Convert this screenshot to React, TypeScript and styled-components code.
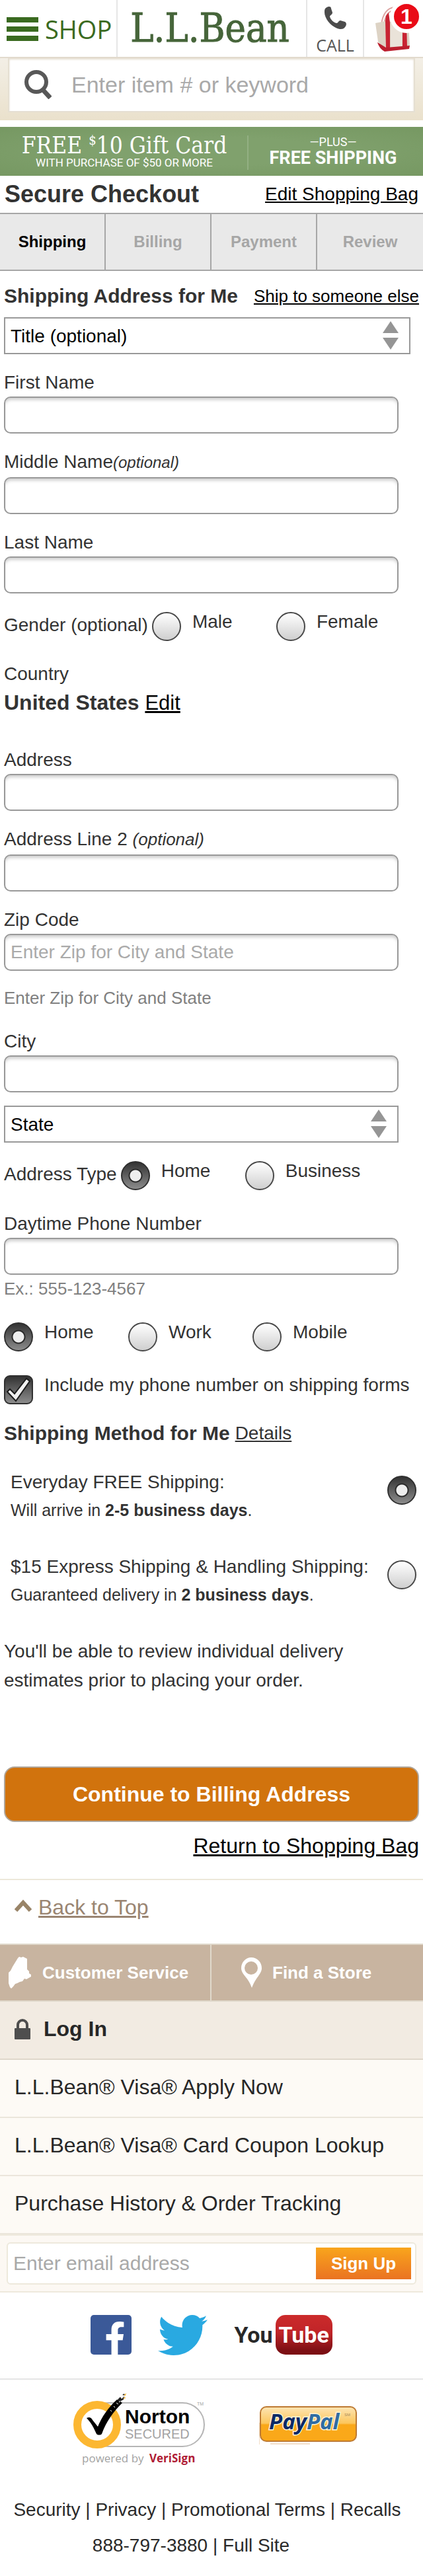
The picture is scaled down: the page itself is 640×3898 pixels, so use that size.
import React, { useState } from "react";
import styled, { createGlobalStyle } from "styled-components";
import { FaFacebookF, FaTwitter } from "react-icons/fa";

const sans = `"Liberation Sans", Arial, Helvetica, sans-serif`;
const humanist = `"Open Sans", "Noto Sans", sans-serif`;
const slab = `"DejaVu Serif Condensed", "DejaVu Serif", serif`;

const GlobalStyle = createGlobalStyle`
  *, *::before, *::after { box-sizing: border-box; }
  body {
    margin: 0;
    background: #fff;
    color: #333;
    font-family: ${sans};
    font-size: 28px;
    line-height: 32px;
  }
  h1, h2, p { margin: 0; padding: 0; }
  a { color: inherit; text-decoration: none; }
  input, select, button { font-family: inherit; margin: 0; border-radius: 0; }
  svg { display: block; flex: none; }
`;

/* Header */

const Header = styled.header`
  display: grid;
  grid-template-columns: 178px minmax(0, 1fr) 86px 89px;
  height: 88px;
  border-bottom: 2px solid #e2dacd;
`;

const ShopButton = styled.button`
  display: flex;
  align-items: center;
  gap: 10px;
  padding: 2px 0 0 10px;
  border: 0;
  border-right: 2px solid #e6e6e6;
  background: none;
  color: #3a6a20;
  font-family: ${humanist};
  font-size: 38px;
`;

const Logo = styled.a`
  display: flex;
  align-items: center;
  justify-content: center;
  padding-right: 6px;
  border-right: 2px solid #e6e6e6;
  color: #46653a;
  font-family: ${slab};
  font-size: 59px;
  -webkit-text-stroke: 1px #46653a;
`;

const CallLink = styled.a`
  display: flex;
  flex-direction: column;
  align-items: center;
  gap: 8px;
  padding-top: 10px;
  border-right: 2px solid #e6e6e6;
  color: #555;
  font-family: ${humanist};
  font-size: 25px;
`;

const BagLink = styled.a`
  position: relative;
  padding: 10px 0 0 17px;
`;

const Badge = styled.span`
  position: absolute;
  top: 0;
  right: 0;
  width: 50px;
  height: 50px;
  border: 6px solid #fff;
  border-radius: 50%;
  background: #e90b17;
  color: #fff;
  font-size: 32px;
  font-weight: bold;
  line-height: 39px;
  text-align: center;
`;

const SearchBar = styled.form`
  padding: 0 12px 12px;
  background: linear-gradient(#f3efe6, #eae1cc);
`;

const SearchBox = styled.label`
  display: flex;
  align-items: center;
  gap: 30px;
  height: 82px;
  padding: 0 16px 0 22px;
  border: 2px solid #e5dfd2;
  border-top: 0;
  background: #fff;
  box-shadow: inset 0 2px 3px #e5ddcf;
`;

const SearchInput = styled.input`
  flex: 1;
  min-width: 0;
  padding: 0;
  border: 0;
  outline: 0;
  background: none;
  font-size: 34px;
  &::placeholder { color: #a9a9a9; opacity: 1; }
`;

/* Promotion */

const Promo = styled.a`
  display: grid;
  grid-template-columns: 374px minmax(0, 1fr);
  height: 74px;
  margin-top: 10px;
  padding: 13px 0;
  background: radial-gradient(ellipse at center, #80a16d 40%, #769862);
  color: #fff;
  text-align: center;
`;

const PromoPart = styled.div`
  border-left: 2px solid transparent;
  & + & {
    padding-right: 8px;
    border-color: #93b083;
  }
`;

const PromoTitle = styled.div`
  font-family: ${slab};
  font-size: 35px;
  line-height: 30px;
  sup { font-size: 20px; line-height: 0; }
`;

const PromoNote = styled.div`
  font-family: Roboto, sans-serif;
  font-size: 17px;
  line-height: 22px;
`;

const PromoPlus = styled.div`
  font-family: Roboto, sans-serif;
  font-size: 18px;
  line-height: 20px;
`;

const PromoShipping = styled.div`
  font-family: Roboto, sans-serif;
  font-size: 27px;
  font-weight: bold;
  line-height: 28px;
`;

/* Checkout head */

const TitleRow = styled.div`
  display: flex;
  align-items: center;
  justify-content: space-between;
  height: 56px;
  padding: 0 7px;
`;

const Title = styled.h1`
  font-size: 36px;
  line-height: 56px;
`;

const TextLink = styled.a<{ $size?: number; $color?: string }>`
  color: ${(p) => p.$color ?? "#000"};
  font-size: ${(p) => p.$size ?? 28}px;
  font-weight: normal;
  text-decoration: underline;
`;

const Steps = styled.ol`
  display: grid;
  grid-template-columns: repeat(4, 1fr);
  margin: 0;
  padding: 0;
  list-style: none;
  border: solid #a6a6a6;
  border-width: 2px 0;
  background: #e9e9e9;
`;

const Step = styled.li<{ $active?: boolean }>`
  height: 84px;
  border-right: 2px solid #a6a6a6;
  color: ${(p) => (p.$active ? "#000" : "#a6a6a6")};
  font-size: 24px;
  font-weight: bold;
  line-height: 84px;
  text-align: center;
  &:last-child { border-right: 0; }
`;

/* Form */

const Form = styled.form`
  padding: 16px 6px 0;
`;

const HeadingRow = styled.div`
  display: flex;
  justify-content: space-between;
  padding-bottom: 10px;
  line-height: 44px;
`;

const Heading = styled.h2`
  font-size: 30px;
  line-height: inherit;
`;

const Field = styled.div<{ $gap?: number }>`
  padding-top: ${(p) => p.$gap ?? 26}px;
`;

const FieldLabel = styled.label<{ $tall?: boolean }>`
  display: block;
  padding-bottom: ${(p) => (p.$tall ? 6 : 4)}px;
  line-height: 34px;
`;

const Optional = styled.em<{ $size: number }>`
  font-size: ${(p) => p.$size}px;
  line-height: 28px;
`;

const TextBox = styled.input`
  display: block;
  width: 95%;
  height: 56px;
  padding: 0 8px;
  border: 2px solid #999;
  border-radius: 10px;
  background: #fff;
  box-shadow: inset 0 5px 5px -2px #ccc;
  font-size: 28px;
  &::placeholder { color: #aaa; opacity: 1; }
`;

const Hint = styled.p`
  padding-top: 4px;
  color: #808080;
  font-size: 26px;
  line-height: 34px;
`;

const ZipHint = styled(Hint)`
  padding: 24px 0 6px;
`;

const SelectWrap = styled.div<{ $width: string; $gap?: number }>`
  position: relative;
  width: ${(p) => p.$width};
  margin-top: ${(p) => p.$gap ?? 0}px;
  svg {
    position: absolute;
    top: 6px;
    right: 18px;
    pointer-events: none;
  }
`;

const Select = styled.select`
  display: block;
  width: 100%;
  height: 56px;
  padding: 0 8px;
  appearance: none;
  border: 2px solid #999;
  background: #fff;
  color: #000;
  font-size: 28px;
`;

const Choices = styled.div<{ $gap: number }>`
  display: flex;
  align-items: flex-start;
  padding-top: ${(p) => p.$gap}px;
`;

const ChoicesTitle = styled.span`
  padding-right: 6px;
  line-height: 40px;
`;

const Choice = styled.label<{ $wide?: boolean }>`
  display: flex;
  gap: 17px;
  width: ${(p) => (p.$wide ? "auto" : "188px")};
  line-height: 30px;
`;

const Radio = styled.input`
  flex: none;
  width: 44px;
  height: 44px;
  appearance: none;
  border: 2px solid #484848;
  border-radius: 50%;
  background: linear-gradient(#fff, #cfcfcf);
  &:checked {
    border-color: #303030;
    background:
      radial-gradient(circle at center, #eee 8px, #2a2a2a 9px, #2a2a2a 10px, transparent 11px),
      linear-gradient(#333, #8c8c8c);
  }
`;

const CheckWrap = styled.span`
  position: relative;
  flex: none;
  height: 44px;
  svg {
    position: absolute;
    top: 0;
    left: 0;
    pointer-events: none;
  }
  input:not(:checked) + svg { display: none; }
`;

const Checkbox = styled.input`
  display: block;
  width: 44px;
  height: 44px;
  appearance: none;
  border: 2px solid #303030;
  border-radius: 9px;
  background: linear-gradient(#fff, #cfcfcf);
  &:checked { background: linear-gradient(#333, #8c8c8c); }
`;

const Country = styled.div`
  padding: 34px 0 20px;
`;

const CountryName = styled.p`
  padding-top: 4px;
  font-size: 32px;
  font-weight: bold;
  line-height: 46px;
`;

const MethodHeading = styled.div`
  display: flex;
  gap: 8px;
  padding: 24px 0 34px;
  line-height: 40px;
`;

const Methods = styled.div`
  display: grid;
  gap: 44px;
  padding: 0 4px 0 10px;
`;

const Method = styled.label`
  display: flex;
  justify-content: space-between;
  line-height: 40px;
  input { margin-top: 10px; }
`;

const MethodNote = styled.div`
  font-size: 25px;
  line-height: 44px;
`;

const ReviewNote = styled.p`
  max-width: 560px;
  padding: 42px 0 108px;
  line-height: 44px;
`;

const Continue = styled.button`
  display: block;
  width: 100%;
  height: 84px;
  border: 2px solid #b0a69a;
  border-radius: 16px;
  background: #d1730d;
  color: #fff;
  font-size: 32px;
  font-weight: bold;
`;

const ReturnRow = styled.p`
  padding: 16px 0 30px;
  font-size: 32px;
  line-height: 40px;
  text-align: right;
`;

/* Footer */

const BackRow = styled.div`
  display: flex;
  gap: 10px;
  height: 98px;
  padding: 20px 22px 0;
  border-top: 2px solid #ece8da;
  line-height: 42px;
  svg { margin-top: 9px; }
`;

const ServiceBar = styled.nav`
  display: grid;
  grid-template-columns: 1fr 1fr;
  border: solid #e0d9cc;
  border-width: 2px 0;
  background: #c8b4a0;
`;

const ServiceLink = styled.a<{ $indent: number }>`
  display: flex;
  align-items: center;
  gap: 16px;
  height: 84px;
  padding-left: ${(p) => p.$indent}px;
  color: #fff;
  font-size: 26px;
  font-weight: bold;
  &:first-child { border-right: 2px solid #e0d9cc; }
`;

const MenuLink = styled.a<{ $strong?: boolean }>`
  display: flex;
  align-items: center;
  gap: 20px;
  height: 88px;
  padding: 0 22px 4px;
  border-bottom: 2px solid ${(p) => (p.$strong ? "#dfd7ca" : "#ebe6db")};
  background: ${(p) => (p.$strong ? "#f2ebe2" : "#fdfaf5")};
  color: #272727;
  font-size: 32px;
  font-weight: ${(p) => (p.$strong ? "bold" : "normal")};
`;

const EmailForm = styled.form`
  padding: 10px;
  border: solid #eee9dc;
  border-width: 2px 0;
  background: #fcf8f3;
`;

const EmailBox = styled.div`
  display: flex;
  align-items: center;
  height: 64px;
  padding-right: 6px;
  border: 2px solid #eee9dc;
  border-radius: 6px;
  background: #fff;
`;

const EmailInput = styled.input`
  flex: 1;
  min-width: 0;
  height: 60px;
  padding: 0 8px;
  border: 0;
  background: none;
  font-size: 30px;
  &::placeholder { color: #a9a9a9; opacity: 1; }
`;

const SignUp = styled.button`
  width: 144px;
  height: 48px;
  padding: 0;
  border: 0;
  background: linear-gradient(#f9a51c, #ea7322);
  color: #fff;
  font-size: 26px;
  font-weight: bold;
`;

const Social = styled.div`
  display: flex;
  justify-content: center;
  gap: 40px;
  height: 132px;
  padding-top: 34px;
  border-bottom: 2px solid #e5e5e5;
`;

const FacebookLink = styled.a`
  display: flex;
  align-items: flex-end;
  justify-content: flex-end;
  width: 62px;
  height: 60px;
  overflow: hidden;
  border-radius: 5px;
  background: #3b5998;
  color: #fff;
`;

const TwitterLink = styled.a`
  display: flex;
  align-items: center;
  height: 60px;
  color: #29a9e1;
`;

const YouTubeLink = styled.a`
  display: flex;
  align-items: center;
  gap: 4px;
  height: 60px;
  color: #282828;
  font-family: Roboto, sans-serif;
  font-size: 34px;
  font-weight: bold;
`;

const Tube = styled.span`
  width: 86px;
  height: 60px;
  border-radius: 15px;
  background: linear-gradient(#cc2b2b, #c02428 45%, #7c0f14 90%);
  color: #fff;
  line-height: 60px;
  text-align: center;
`;

const Seals = styled.div`
  display: flex;
  justify-content: center;
  gap: 80px;
  padding: 20px 0 0 10px;
`;

const PayPalSlot = styled.a`
  padding-top: 20px;
`;

const Legal = styled.div`
  padding: 36px 0 20px;
  color: #2a2a2a;
  line-height: 54px;
  text-align: center;
`;

const LegalRow = styled.p<{ $trail: number }>`
  padding-right: ${(p) => p.$trail}px;
`;

/* Drawings */

const MenuIcon = () => (
  <svg width="48" height="36" viewBox="0 0 48 36" fill="#3a6a20">
    <rect width="48" height="8" />
    <rect y="14" width="48" height="8" />
    <rect y="28" width="48" height="8" />
  </svg>
);

const PhoneIcon = () => (
  <svg width="34" height="34" viewBox="0 0 34 34" fill="#4c4c4c">
    <path d="M1 7C1 2 5 0 8 0c2 0 3 1 3 3l2 6c0 3-4 4-4 6 1 5 6 9 10 10 3 0 3-4 6-4l7 2c3 2 2 6 0 8-2 3-5 3-8 3C12 32 0 18 1 7z" />
  </svg>
);

const BagIcon = () => (
  <svg width="54" height="68" viewBox="0 0 54 68">
    <path d="M9 27C11 12 17 2 29 1M13 27C15 14 19 6 29 6" fill="none" stroke="#dca6a4" strokeWidth="2" />
    <path d="M0 25l15-3 35 3 2 35-38 5-10-12z" fill="#ddd3c5" />
    <path d="M23 25h17v36H23z" fill="#eae3d9" />
    <path d="M15 22l1-8 4-5 2 15v38h-6z" fill="#c82433" />
    <path d="M41 24h6l1 37h-7z" fill="#c82433" />
    <path d="M3 54l13 8 36-3-1 5-37 4c-4-2-9-7-11-14z" fill="#bc1f2e" />
  </svg>
);

const SearchIcon = () => (
  <svg width="42" height="44" viewBox="0 0 42 44" fill="none" stroke="#585858">
    <circle cx="19" cy="18" r="15" strokeWidth="6" />
    <path d="M28 29l12 13" strokeWidth="7" />
  </svg>
);

const SelectArrows = () => (
  <svg width="24" height="44" viewBox="0 0 24 44" fill="#959595">
    <path d="M12 0l12 18H0zM12 43L0 25h24z" />
  </svg>
);

const CheckMark = () => (
  <svg width="44" height="44" viewBox="0 0 44 44">
    <path d="M5 25l4-4 7 7L34 5l5 4-21 30z" fill="#f2f2f2" stroke="#1c1c1c" strokeWidth="2" />
  </svg>
);

const UpIcon = () => (
  <svg width="26" height="20" viewBox="0 0 26 20" fill="none" stroke="#998468" strokeWidth="6">
    <path d="M2 17L13 5l11 12" />
  </svg>
);

const StateIcon = () => (
  <svg width="35" height="48" viewBox="0 0 35 48" fill="#fff">
    <path d="M14 2l2-2 3 1 3-1 6 3v16l3 3v3l3 2v3l-7 4-3-1-3 4-4 1-4 2-3 1-3 4-3 3-2-2-2-6V24l3-3 3-6z" />
  </svg>
);

const PinIcon = () => (
  <svg width="31" height="46" viewBox="0 0 31 46" fill="#fff">
    <path fillRule="evenodd" d="M15 0c9 0 16 7 16 16 0 9-9 14-15 30C11 30 0 26 0 16 0 7 7 0 15 0zm0 6a10 10 0 1 0 0 20 10 10 0 0 0 0-20z" />
  </svg>
);

const LockIcon = () => (
  <svg width="24" height="32" viewBox="0 0 24 32">
    <path d="M5 16V10a7 7 0 0 1 14 0v6" fill="none" stroke="#4e4e4e" strokeWidth="4" />
    <rect y="15" width="24" height="17" rx="1" fill="#4e4e4e" />
  </svg>
);

const NortonSeal = () => (
  <svg width="201" height="114" viewBox="0 0 201 114">
    <rect x="20" y="15" width="178" height="66" rx="33" fill="#fff" stroke="#b5b5b5" strokeWidth="2" />
    <circle cx="36" cy="48" r="30" fill="#fff" stroke="#fcb731" strokeWidth="12" />
    <path d="M20 38c4-2 7-1 9 3l8 10C43 36 53 22 66 10l8 5C60 29 50 43 43 62c-2 2-6 2-8 0-4-9-8-17-15-24z" fill="#000" />
    <path d="M67 10l4-4 2 3 4-4-1 5-4 2-2 5zM74 3l3-2 1 3z" fill="#222" />
    <path d="M76 4l4-4-1 4zM75 9l3-3 1 2z" fill="#fcb731" />
    <path d="M61 20l2 2M65 15l3 2M56 26l2 2M69 14l2-2" stroke="#fff" />
    <text x="78" y="46" fontFamily="Liberation Sans, sans-serif" fontSize="30" fontWeight="bold">Norton</text>
    <text x="78" y="69" fontFamily="Liberation Sans, sans-serif" fontSize="20" fill="#a3a3a3">SECURED</text>
    <text x="187" y="19" fontFamily="Liberation Sans, sans-serif" fontSize="7" fill="#a3a3a3">TM</text>
    <text x="13" y="105" fontFamily="Open Sans, sans-serif" fontSize="17" fill="#a3a3a3">powered by</text>
    <text x="115" y="105" fontFamily="Open Sans, sans-serif" fontSize="17" fontWeight="bold" fill="#b01c35">VeriSign</text>
  </svg>
);

const PayPalSeal = () => (
  <svg width="148" height="58" viewBox="0 0 148 58">
    <defs>
      <linearGradient id="paypal" x1="0" y1="0" x2="0" y2="1">
        <stop offset="0" stopColor="#fde5b4" />
        <stop offset="0.48" stopColor="#fcc65c" />
        <stop offset="0.52" stopColor="#faa819" />
        <stop offset="1" stopColor="#faa819" />
      </linearGradient>
    </defs>
    <rect x="2" y="1" width="145" height="52" rx="9" fill="url(#paypal)" stroke="#bd7a33" strokeWidth="2" />
    <text x="15" y="35" fontFamily="Open Sans, sans-serif" fontSize="33" fontWeight="bold" fontStyle="italic" fill="#0b2a67" stroke="#fff3d6" strokeWidth="3" paintOrder="stroke">
      Pay<tspan fill="#2f6ca3">Pal</tspan>
    </text>
    <text x="129" y="15" fontFamily="Liberation Sans, sans-serif" fontSize="6" fill="#a98c5c">SM</text>
    <path d="M0 25v33M17 57h60" stroke="#e6bd92" />
  </svg>
);

/* Page */

interface TextFieldProps {
  id: string;
  label: React.ReactNode;
  tall?: boolean;
  placeholder?: string;
  type?: string;
  gap?: number;
}

function TextField({ id, label, tall, placeholder, type = "text", gap }: TextFieldProps) {
  return (
    <Field $gap={gap}>
      <FieldLabel htmlFor={id} $tall={tall}>{label}</FieldLabel>
      <TextBox id={id} name={id} type={type} placeholder={placeholder} />
    </Field>
  );
}

interface RadioGroupProps {
  name: string;
  title?: string;
  label: string;
  options: string[];
  initial?: string;
  gap: number;
}

function RadioGroup({ name, title, label, options, initial, gap }: RadioGroupProps) {
  const [value, setValue] = useState(initial);
  return (
    <Choices role="radiogroup" aria-label={label} $gap={gap}>
      {title && <ChoicesTitle>{title}</ChoicesTitle>}
      {options.map((option) => (
        <Choice key={option}>
          <Radio type="radio" name={name} value={option} checked={value === option} onChange={() => setValue(option)} />
          {option}
        </Choice>
      ))}
    </Choices>
  );
}

const hold = (e: React.FormEvent) => e.preventDefault();

export default function App() {
  return (
    <>
      <GlobalStyle />
      <Header id="top">
        <ShopButton type="button"><MenuIcon />SHOP</ShopButton>
        <Logo href="#">L.L.Bean</Logo>
        <CallLink href="tel:888-797-3880"><PhoneIcon />CALL</CallLink>
        <BagLink href="#" aria-label="Shopping bag"><BagIcon /><Badge>1</Badge></BagLink>
      </Header>
      <SearchBar role="search" onSubmit={hold}>
        <SearchBox>
          <SearchIcon />
          <SearchInput type="text" aria-label="Search" placeholder="Enter item # or keyword" />
        </SearchBox>
      </SearchBar>
      <Promo href="#">
        <PromoPart>
          <PromoTitle>FREE <sup>$</sup>10 Gift Card</PromoTitle>
          <PromoNote>WITH PURCHASE OF $50 OR MORE</PromoNote>
        </PromoPart>
        <PromoPart>
          <PromoPlus>—PLUS—</PromoPlus>
          <PromoShipping>FREE SHIPPING</PromoShipping>
        </PromoPart>
      </Promo>

      <main>
        <TitleRow>
          <Title>Secure Checkout</Title>
          <TextLink href="#">Edit Shopping Bag</TextLink>
        </TitleRow>
        <Steps>
          <Step $active aria-current="step">Shipping</Step>
          <Step>Billing</Step>
          <Step>Payment</Step>
          <Step>Review</Step>
        </Steps>

        <Form onSubmit={hold}>
          <HeadingRow>
            <Heading>Shipping Address for Me</Heading>
            <TextLink href="#" $size={26}>Ship to someone else</TextLink>
          </HeadingRow>
          <SelectWrap $width="98%">
            <Select aria-label="Title"><option>Title (optional)</option></Select>
            <SelectArrows />
          </SelectWrap>
          <TextField id="first" label="First Name" />
          <TextField id="middle" tall label={<>Middle Name<Optional $size={24}>(optional)</Optional></>} />
          <TextField id="last" label="Last Name" />
          <RadioGroup name="gender" title="Gender (optional)" label="Gender" options={["Male", "Female"]} gap={28} />
          <Country>
            <p>Country</p>
            <CountryName>United States <TextLink href="#" $size={31}>Edit</TextLink></CountryName>
          </Country>
          <TextField id="address" label="Address" />
          <TextField id="address2" tall label={<>Address Line 2 <Optional $size={26}>(optional)</Optional></>} />
          <TextField id="zip" label="Zip Code" placeholder="Enter Zip for City and State" />
          <ZipHint>Enter Zip for City and State</ZipHint>
          <TextField id="city" label="City" />
          <SelectWrap $width="95%" $gap={20}>
            <Select aria-label="State"><option>State</option></Select>
            <SelectArrows />
          </SelectWrap>
          <RadioGroup name="addressType" title="Address Type" label="Address Type" options={["Home", "Business"]} initial="Home" gap={28} />
          <TextField id="phone" type="tel" label="Daytime Phone Number" gap={34} />
          <Hint>Ex.: 555-123-4567</Hint>
          <RadioGroup name="phoneType" label="Phone type" options={["Home", "Work", "Mobile"]} initial="Home" gap={34} />
          <Choices $gap={36}>
            <Choice $wide>
              <CheckWrap><Checkbox type="checkbox" name="include" defaultChecked /><CheckMark /></CheckWrap>
              Include my phone number on shipping forms
            </Choice>
          </Choices>

          <MethodHeading>
            <Heading>Shipping Method for Me</Heading>
            <TextLink href="#" $color="#333">Details</TextLink>
          </MethodHeading>
          <Methods role="radiogroup" aria-label="Shipping method">
            <Method>
              <div>
                Everyday FREE Shipping:
                <MethodNote>Will arrive in <b>2-5 business days</b>.</MethodNote>
              </div>
              <Radio type="radio" name="method" defaultChecked />
            </Method>
            <Method>
              <div>
                $15 Express Shipping &amp; Handling Shipping:
                <MethodNote>Guaranteed delivery in <b>2 business days</b>.</MethodNote>
              </div>
              <Radio type="radio" name="method" />
            </Method>
          </Methods>
          <ReviewNote>You'll be able to review individual delivery estimates prior to placing your order.</ReviewNote>
          <Continue type="submit">Continue to Billing Address</Continue>
          <ReturnRow><TextLink href="#" $size={32}>Return to Shopping Bag</TextLink></ReturnRow>
        </Form>
      </main>

      <footer>
        <BackRow>
          <UpIcon />
          <TextLink href="#top" $size={32} $color="#9a8572">Back to Top</TextLink>
        </BackRow>
        <ServiceBar>
          <ServiceLink href="#" $indent={13}><StateIcon />Customer Service</ServiceLink>
          <ServiceLink href="#" $indent={45}><PinIcon />Find a Store</ServiceLink>
        </ServiceBar>
        <nav>
          <MenuLink href="#" $strong><LockIcon />Log In</MenuLink>
          <MenuLink href="#">L.L.Bean® Visa® Apply Now</MenuLink>
          <MenuLink href="#">L.L.Bean® Visa® Card Coupon Lookup</MenuLink>
          <MenuLink href="#">Purchase History &amp; Order Tracking</MenuLink>
        </nav>
        <EmailForm onSubmit={hold}>
          <EmailBox>
            <EmailInput type="email" aria-label="Email address" placeholder="Enter email address" />
            <SignUp type="submit">Sign Up</SignUp>
          </EmailBox>
        </EmailForm>
        <Social>
          <FacebookLink href="#" aria-label="Facebook"><FaFacebookF size={50} /></FacebookLink>
          <TwitterLink href="#" aria-label="Twitter"><FaTwitter size={75} /></TwitterLink>
          <YouTubeLink href="#">You<Tube>Tube</Tube></YouTubeLink>
        </Social>
        <Seals>
          <a href="#" aria-label="Norton Secured"><NortonSeal /></a>
          <PayPalSlot href="#" aria-label="PayPal"><PayPalSeal /></PayPalSlot>
        </Seals>
        <Legal>
          <LegalRow $trail={13}>
            <a href="#">Security</a> | <a href="#">Privacy</a> | <a href="#">Promotional Terms</a> | <a href="#">Recalls</a>
          </LegalRow>
          <LegalRow $trail={62}>
            <a href="tel:888-797-3880">888-797-3880</a> | <a href="#">Full Site</a>
          </LegalRow>
        </Legal>
      </footer>
    </>
  );
}
